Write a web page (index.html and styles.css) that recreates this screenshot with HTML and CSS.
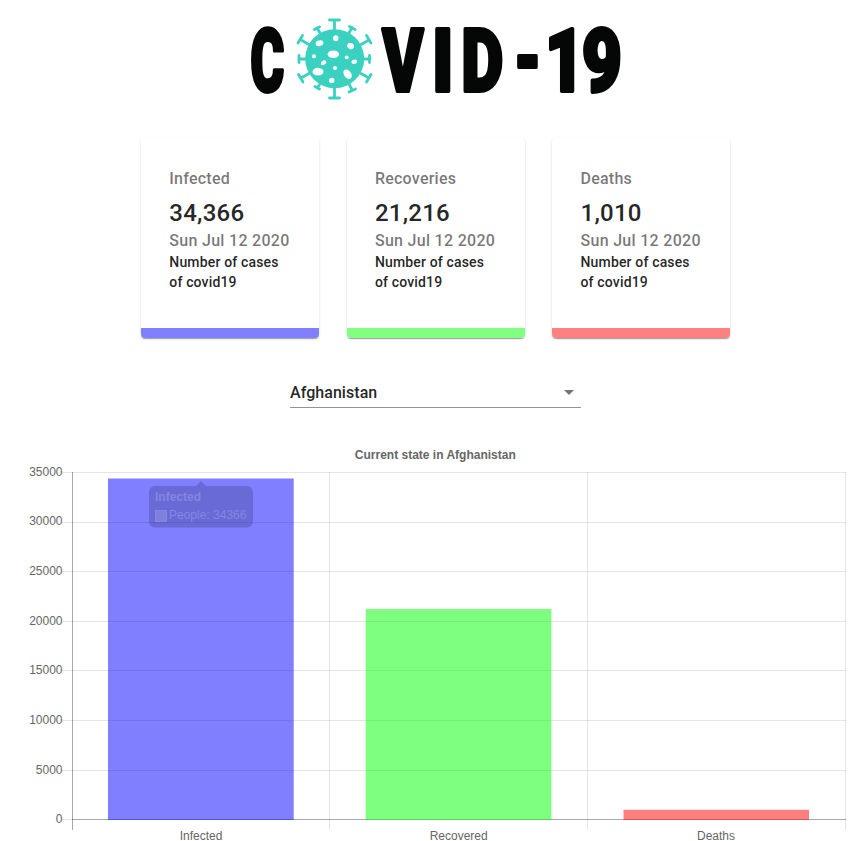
FILE: index.html
```html
<!DOCTYPE html>
<html lang="en">
<head>
<meta charset="utf-8">
<title>COVID-19 Tracker</title>
<link rel="stylesheet" href="styles.css">
</head>
<body>
<main class="app">
  <svg class="logo" width="386" height="90" viewBox="243 14 386 90" role="img" aria-label="COVID-19">
    <g class="logo-text">
      <text transform="translate(250.500 91) scale(.59 1)">C</text>
      <text transform="translate(382.500 91) scale(.71 1)">V</text>
      <text transform="translate(432.300 91) scale(.8 1)">I</text>
      <text transform="translate(461.500 91) scale(.74 1)">D</text>
      <text transform="translate(514 87.500) scale(.7 1)">-</text>
      <text transform="translate(545 91) scale(.78 1)">1</text>
      <text transform="translate(582 91) scale(.79 1)">9</text>
    </g>
    <g class="virus">
      <circle cx="334.7" cy="58.7" r="29.5"/>
      <g class="spikes">
        <path d="M334.500 30V20M329.500 20h10M334.500 88v10M329.500 98h10M306 59h-7M299 55.500v7M363 59h7M369.500 55.500v7M309 44.500l-8-4.500M302.500 35.500l-4.500 7.500M361 44.500l8-4.500M366.500 35.500l4.500 7.500M309 73.500l-8 4.500M298.500 74.500l4.500 7.500M361 73.500l8 4.500M371 74.500l-4.500 7.500M320 33l-3-5M314.500 29.500l5-2.500M349 33l3-5.500M349.500 26.500l5.500 3M320 84l-3 4M315 86.500l4.500 2.500M349 84l3 6M349 92l6.500-3"/>
      </g>
      <g class="spots">
        <ellipse cx="335.800" cy="38.300" rx="2.700" ry="3"/>
        <ellipse cx="319.500" cy="43.200" rx="4" ry="2.800" transform="rotate(-15 319.500 43.200)"/>
        <ellipse cx="350.600" cy="46" rx="3.600" ry="2.900" transform="rotate(25 350.600 46)"/>
        <circle cx="314" cy="56.300" r="2"/>
        <ellipse cx="333.300" cy="54.300" rx="5.700" ry="3.800"/>
        <circle cx="346.700" cy="57.300" r="1.900"/>
        <ellipse cx="323.600" cy="62.700" rx="3" ry="2" transform="rotate(-30 323.600 62.700)"/>
        <ellipse cx="354.300" cy="61.800" rx="2.900" ry="2.100" transform="rotate(-20 354.300 61.800)"/>
        <circle cx="335" cy="68" r="2"/>
        <ellipse cx="318" cy="71.700" rx="5.500" ry="3.900"/>
        <ellipse cx="347.600" cy="74.200" rx="3.600" ry="5.300" transform="rotate(-35 347.600 74.200)"/>
        <circle cx="331.800" cy="80.500" r="2.700"/>
      </g>
    </g>
  </svg>

  <section class="cards">
    <article class="card infected">
      <p class="label">Infected</p>
      <h2 class="count">34,366</h2>
      <p class="date">Sun Jul 12 2020</p>
      <p class="note">Number of cases of covid19</p>
    </article>
    <article class="card recovered">
      <p class="label">Recoveries</p>
      <h2 class="count">21,216</h2>
      <p class="date">Sun Jul 12 2020</p>
      <p class="note">Number of cases of covid19</p>
    </article>
    <article class="card deaths">
      <p class="label">Deaths</p>
      <h2 class="count">1,010</h2>
      <p class="date">Sun Jul 12 2020</p>
      <p class="note">Number of cases of covid19</p>
    </article>
  </section>

  <div class="picker">
    <span>Afghanistan</span>
    <svg width="24" height="24" viewBox="0 0 24 24"><path d="M7 10l5 5 5-5z"/></svg>
  </div>

  <svg class="chart" width="866" height="401" viewBox="0 440 866 401">
    <text class="title" x="435.300" y="459">Current state in Afghanistan</text>
    <g class="grid">
      <path d="M62 472.500H846M62 522.500H846M62 571.500H846M62 621.500H846M62 670.500H846M62 720.500H846M62 770.500H846M62 819.500H72M329.500 472V830M587.500 472V830M845.500 472V830"/>
    </g>
    <path class="axis" d="M72.500 472V830M72 819.500H846"/>
    <rect class="bar-infected" x="108" y="478.500" width="185.700" height="341.500"/>
    <rect class="bar-recovered" x="365.700" y="609" width="185.700" height="211"/>
    <rect class="bar-deaths" x="623.500" y="809.800" width="185.500" height="10.200"/>
    <g class="y-labels">
      <text x="62.500" y="476">35000</text>
      <text x="62.500" y="525">30000</text>
      <text x="62.500" y="575">25000</text>
      <text x="62.500" y="625">20000</text>
      <text x="62.500" y="674">15000</text>
      <text x="62.500" y="724">10000</text>
      <text x="62.500" y="774">5000</text>
      <text x="62.500" y="823">0</text>
    </g>
    <g class="x-labels">
      <text x="201" y="840">Infected</text>
      <text x="458.700" y="840">Recovered</text>
      <text x="716" y="840">Deaths</text>
    </g>
    <g class="tooltip">
      <path class="tip-box" d="M155 486H196l5-5 5 5H247a6 6 0 0 1 6 6V521.500a6 6 0 0 1-6 6H155a6 6 0 0 1-6-6V492a6 6 0 0 1 6-6z"/>
      <text class="tip-title" x="155" y="501">Infected</text>
      <rect class="tip-key" x="155.500" y="510.500" width="11" height="11"/>
      <text class="tip-body" x="169" y="519">People: 34366</text>
    </g>
  </svg>
</main>
</body>
</html>
```
FILE: styles.css
```css
* { box-sizing: border-box; }

body {
  margin: 0;
  background: #fff;
  color: rgba(0, 0, 0, .87);
  font-family: Roboto, "Liberation Sans", sans-serif;
  font-weight: 500;
}

.app {
  padding-top: 14px;
  display: flex;
  flex-direction: column;
  align-items: center;
}

.logo { flex: none; margin-left: 6px; overflow: visible; }
.logo-text {
  font-family: Roboto, sans-serif;
  font-size: 87px;
  font-weight: 900;
  fill: #050706;
  stroke: #050706;
  stroke-width: 4;
  stroke-linejoin: round;
}
.virus { fill: #3ad1c0; }
.spikes { fill: none; stroke: #3ad1c0; stroke-width: 2.8; stroke-linecap: round; }
.spots { fill: #fff; }

.cards {
  flex: none;
  display: flex;
  gap: 27.6px;
  margin: 34px 0 0 5px;
}
.card {
  width: 178px;
  height: 200px;
  padding: 28.5px 28px 0 28.4px;
  border-bottom: 10px solid;
  border-radius: 4px;
  box-shadow: 0 2px 1px -1px rgba(0, 0, 0, .2), 0 1px 1px rgba(0, 0, 0, .14), 0 1px 3px rgba(0, 0, 0, .12);
}
.infected { border-color: #8080ff; }
.recovered { border-color: #80ff80; }
.deaths { border-color: #ff8080; }
.card p, .card h2 { margin: 0; font-weight: 500; white-space: nowrap; }
.card .label, .card .date {
  font-size: 16px;
  line-height: 24px;
  letter-spacing: .3px;
  color: rgba(0, 0, 0, .54);
}
.card .label { margin-bottom: 6.2px; letter-spacing: .24px; }
.card .date { margin-bottom: -1px; }
.card .count { font-size: 24px; line-height: 32px; letter-spacing: .25px; }
.card .note { font-size: 14px; line-height: 20px; letter-spacing: .16px; white-space: normal; }

.picker {
  flex: none;
  width: 291px;
  height: 32px;
  margin: 38px 0 32px 5px;
  display: flex;
  align-items: center;
  justify-content: space-between;
  border-bottom: 1px solid #949494;
  font-size: 16px;
}
.picker span { padding-top: 2px; letter-spacing: .05px; }
.picker svg { fill: #757575; }

.chart {
  flex: none;
  display: block;
  font-family: "Liberation Sans", Arial, sans-serif;
  font-size: 12px;
  font-weight: 400;
  fill: #666;
}
.title { font-weight: 700; text-anchor: middle; }
.grid { fill: none; stroke: rgba(0, 0, 0, .1); }
.axis { fill: none; stroke: rgba(0, 0, 0, .34); }
.bar-infected { fill: rgba(0, 0, 255, .5); }
.bar-recovered { fill: rgba(0, 255, 0, .5); }
.bar-deaths { fill: rgba(255, 0, 0, .5); }
.y-labels { text-anchor: end; }
.x-labels { text-anchor: middle; }
.tooltip { fill: #8585e2; }
.tip-box { fill: rgba(0, 0, 0, .16); }
.tip-title { font-weight: 700; }
.tip-key { fill: #8080dc; stroke: #8686e2; }
```
